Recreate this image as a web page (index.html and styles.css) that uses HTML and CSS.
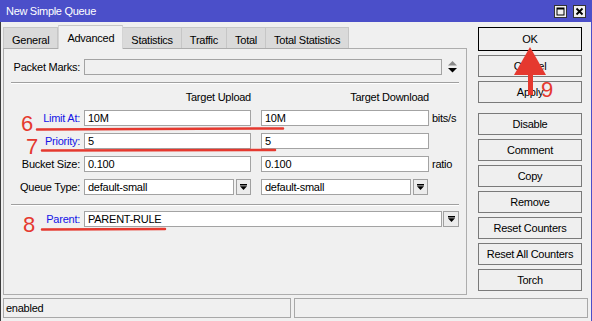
FILE: index.html
```html
<!DOCTYPE html>
<html lang="en">
<head>
  <meta charset="UTF-8" />
  <title>New Simple Queue</title>
  <link rel="stylesheet" href="styles.css">
</head>
<body>
  <div class="window">
    <!-- Title bar -->
    <div class="titlebar">
      <span class="title">New Simple Queue</span>
      <div class="tb-btns">
        <svg class="tb" viewBox="0 0 13 13"><rect x="0.5" y="0.5" width="12" height="12" fill="#f0f0f0" stroke="#333"/><rect x="3" y="3" width="7" height="7" fill="none" stroke="#000"/><rect x="3" y="3" width="7" height="1.5" fill="#000"/></svg>
        <svg class="tb" viewBox="0 0 13 13"><rect x="0.5" y="0.5" width="12" height="12" fill="#f0f0f0" stroke="#333"/><path d="M3.5 3.5 L9.5 9.5 M9.5 3.5 L3.5 9.5" stroke="#000" stroke-width="1.8"/></svg>
      </div>
    </div>

    <div class="frame">
      <div class="body">
        <div class="main">
          <!-- Tabs -->
          <div class="tabs">
            <div class="tab first">General</div>
            <div class="tab active">Advanced</div>
            <div class="tab">Statistics</div>
            <div class="tab">Traffic</div>
            <div class="tab">Total</div>
            <div class="tab">Total Statistics</div>
          </div>

          <div class="panel">
            <div class="row">
              <div class="lbl">Packet Marks:</div>
              <div class="field wide off"></div>
              <svg class="updown" viewBox="0 0 9 12"><polygon points="4.5,0 0,4.5 9,4.5" fill="#8a8a8a"/><polygon points="0,7 9,7 4.5,11.5" fill="#000"/></svg>
            </div>
            <div class="sep"></div>

            <div class="heads">
              <div class="lbl"></div>
              <div class="head">Target Upload</div>
              <div class="head">Target Download</div>
            </div>

            <div class="row">
              <div class="lbl link">Limit At:</div>
              <div class="field">10M</div>
              <div class="field col2">10M</div>
              <div class="unit">bits/s</div>
            </div>
            <div class="row">
              <div class="lbl link">Priority:</div>
              <div class="field">5</div>
              <div class="field col2">5</div>
            </div>
            <div class="row">
              <div class="lbl">Bucket Size:</div>
              <div class="field">0.100</div>
              <div class="field col2">0.100</div>
              <div class="unit">ratio</div>
            </div>
            <div class="row">
              <div class="lbl">Queue Type:</div>
              <div class="field short">default-small</div>
              <div class="dd"><svg viewBox="0 0 7 6"><rect x="0" y="0" width="7" height="1.5" fill="#000"/><polygon points="0,2.3 7,2.3 3.5,6" fill="#000"/></svg></div>
              <div class="field short col2">default-small</div>
              <div class="dd"><svg viewBox="0 0 7 6"><rect x="0" y="0" width="7" height="1.5" fill="#000"/><polygon points="0,2.3 7,2.3 3.5,6" fill="#000"/></svg></div>
            </div>
            <div class="sep sep2"></div>

            <div class="row parent">
              <div class="lbl link">Parent:</div>
              <div class="field wide">PARENT-RULE</div>
              <div class="dd near"><svg viewBox="0 0 7 6"><rect x="0" y="0" width="7" height="1.5" fill="#000"/><polygon points="0,2.3 7,2.3 3.5,6" fill="#000"/></svg></div>
            </div>
          </div>
        </div>

        <!-- Buttons -->
        <div class="side">
          <div class="btn def">OK</div>
          <div class="btn">Cancel</div>
          <div class="btn gap">Apply</div>
          <div class="btn">Disable</div>
          <div class="btn">Comment</div>
          <div class="btn">Copy</div>
          <div class="btn">Remove</div>
          <div class="btn">Reset Counters</div>
          <div class="btn">Reset All Counters</div>
          <div class="btn">Torch</div>
        </div>
      </div>

      <div class="status">
        <div class="cell first">enabled</div>
        <div class="cell rest"></div>
      </div>
    </div>

    <!-- red marks drawn on top of the screenshot -->
    <svg class="marks" viewBox="0 0 592 321">
      <g stroke="#e5392f" stroke-width="2.5" stroke-linecap="round" fill="none">
        <path d="M37 129.5 L283 128.5"/>
        <path d="M42 150.5 L275 150"/>
        <path d="M42 229.5 L165 229"/>
      </g>
      <polygon points="530,47 514,75 546,75" fill="#e5392f"/>
      <rect x="528" y="74" width="5" height="21" fill="#e5392f"/>
      <g fill="#e5392f" font-family="Liberation Sans, Arial, sans-serif" font-size="22">
        <text x="21" y="131">6</text>
        <text x="26" y="154">7</text>
        <text x="23" y="232">8</text>
        <text x="541" y="97">9</text>
      </g>
    </svg>
  </div>
</body>
</html>
```

FILE: styles.css
```css
* { box-sizing: border-box; }
body { margin: 0; font-family: "Liberation Sans", Arial, sans-serif; font-size: 11px; letter-spacing: -0.25px; color: #000; background: #f0f0f0; }
.window { position: relative; width: 592px; height: 321px; background: #f0f0f0; overflow: hidden; }

.titlebar { height: 22px; background: #4b4fc9; color: #fff; display: flex; align-items: center; justify-content: space-between; padding: 0 6px; }
.title { font-size: 11px; letter-spacing: -0.3px; }
.tb-btns { display: flex; gap: 6px; }
.tb { width: 13px; height: 13px; display: block; }

.frame { height: 299px; border-left: 1px solid #3c3c3c; border-right: 1px solid #4b4fc9; }
.body { display: flex; padding: 3px 0 0 2px; }
.main { width: 464px; }

.tabs { display: flex; align-items: flex-end; height: 23px; }
.tab { height: 21px; padding: 5px 8px 0; line-height: 14px; background: #dadada; border: 1px solid #c6c6c6; border-left: none; border-bottom: none; }
.tab.first { border-left: 1px solid #c6c6c6; }
.tab.active { height: 24px; margin-bottom: -1px; padding-top: 5px; background: #f0f0f0; border-left: 1px solid #d4d4d4; border-right: 1px solid #d4d4d4; position: relative; z-index: 1; }
.tab.active + .tab { border-left: none; }

.panel { height: 247px; border: 1px solid #adadad; padding-top: 10px; }
.row { display: flex; align-items: center; height: 16px; margin-top: 7px; }
.panel > .row:first-child { margin-top: 0; }
.lbl { width: 80px; padding-right: 4px; text-align: right; flex-shrink: 0; }
.lbl.link { color: #1414e6; }
.field { width: 167px; height: 16px; border: 1px solid #a3a3a3; background: #fff; padding: 0 3px; line-height: 14px; white-space: nowrap; }
.field.col2 { margin-left: 10px; width: 168px; }
.field.wide { width: 358px; }
.field.short { width: 150px; }
.field.short.col2 { margin-left: 10px; }
.field.off { background: #f0f0f0; }
.updown { width: 9px; height: 12px; margin-left: 6px; }
.unit { margin-left: 3px; }
.dd { width: 15px; height: 16px; margin-left: 2px; border: 1px solid #a0a0a0; background: #ececec; display: flex; align-items: center; justify-content: center; }
.dd.near { margin-left: 1px; width: 16px; }
.dd svg { width: 7px; height: 6px; display: block; }

.sep { margin: 7px 0 0 7px; width: 448px; border-top: 1px solid #a0a0a0; border-bottom: 1px solid #fff; }
.sep2 { margin-top: 9px; }
.row.parent { margin-top: 5px; }

.heads { display: flex; height: 12px; line-height: 12px; margin-top: 7px; margin-bottom: 1px; }
.head { width: 167px; text-align: right; }
.head + .head { width: 168px; margin-left: 10px; }

.side { width: 104px; margin-left: 11px; padding-top: 2px; }
.btn { height: 22px; line-height: 20px; margin-bottom: 4px; border: 1px solid #7a7a7a; background: #efefef; text-align: center; }
.btn.def { height: 24px; line-height: 22px; border-color: #000; }
.btn.gap { margin-bottom: 10px; }

.status { display: flex; gap: 3px; height: 20px; margin-top: 3px; padding: 0 3px 0 2px; }
.cell { height: 20px; border: 1px solid #a8a8a8; line-height: 18px; padding-left: 2px; }
.cell.first { width: 288px; }
.cell.rest { flex: 1; }

.marks { position: absolute; top: 0; left: 0; width: 592px; height: 321px; pointer-events: none; }
```
